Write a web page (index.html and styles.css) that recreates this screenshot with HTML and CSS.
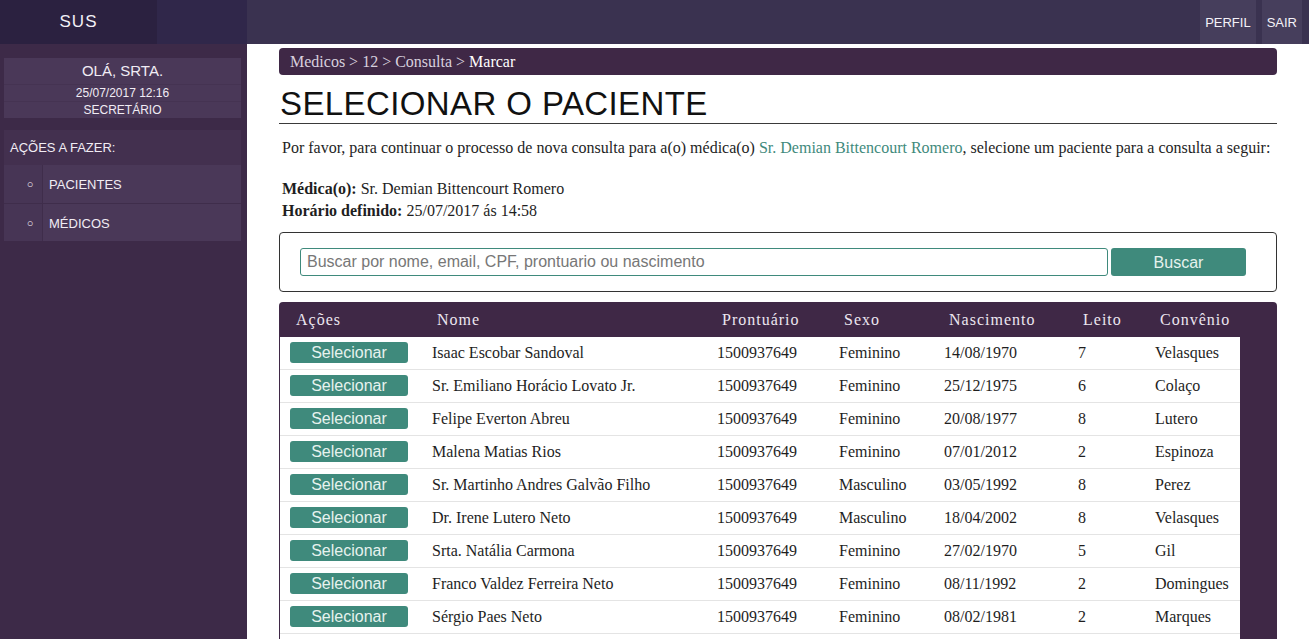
FILE: index.html
```html
<!DOCTYPE html>
<html lang="pt-BR">
<head>
<meta charset="utf-8">
<title>SUS - Selecionar o paciente</title>
<link rel="stylesheet" href="styles.css">
</head>
<body>
<header class="topbar">
  <div class="brand-area">
    <div class="brand">SUS</div>
    <div class="brand-fill"></div>
  </div>
  <nav class="top-nav">
    <a class="top-link" href="#">PERFIL</a>
    <a class="top-link" href="#">SAIR</a>
  </nav>
</header>
<div class="layout">
  <aside class="sidebar">
    <div class="user-box">
      <div class="user-row user-name">OLÁ, SRTA.</div>
      <div class="user-row user-small">25/07/2017 12:16</div>
      <div class="user-row user-small">SECRETÁRIO</div>
    </div>
    <div class="actions">
      <div class="actions-title">AÇÕES A FAZER:</div>
      <ul class="action-list">
        <li class="action-item"><span class="bullet">○</span><a class="action-link" href="#">PACIENTES</a></li>
        <li class="action-item"><span class="bullet">○</span><a class="action-link" href="#">MÉDICOS</a></li>
      </ul>
    </div>
  </aside>
  <main class="content">
    <div class="breadcrumb">Medicos &gt; 12 &gt; Consulta &gt; <span class="crumb-current">Marcar</span></div>
    <h1 class="title">SELECIONAR O PACIENTE</h1>
    <p class="intro">Por favor, para continuar o processo de nova consulta para a(o) médica(o) <a class="doc-link" href="#">Sr. Demian Bittencourt Romero</a>, selecione um paciente para a consulta a seguir:</p>
    <div class="details">
      <div><b>Médica(o):</b> Sr. Demian Bittencourt Romero</div>
      <div><b>Horário definido:</b> 25/07/2017 ás 14:58</div>
    </div>
    <form class="search">
      <input class="search-input" type="text" placeholder="Buscar por nome, email, CPF, prontuario ou nascimento">
      <button class="search-btn" type="button">Buscar</button>
    </form>
    <div class="table-wrap">
      <div class="grid head">
        <div class="th">Ações</div>
        <div class="th">Nome</div>
        <div class="th">Prontuário</div>
        <div class="th">Sexo</div>
        <div class="th">Nascimento</div>
        <div class="th">Leito</div>
        <div class="th">Convênio</div>
      </div>
      <div class="tbody">
        <div class="grid row"><div class="td"><button class="sel-btn" type="button">Selecionar</button></div><div class="td">Isaac Escobar Sandoval</div><div class="td">1500937649</div><div class="td">Feminino</div><div class="td">14/08/1970</div><div class="td">7</div><div class="td">Velasques</div></div>
        <div class="grid row"><div class="td"><button class="sel-btn" type="button">Selecionar</button></div><div class="td">Sr. Emiliano Horácio Lovato Jr.</div><div class="td">1500937649</div><div class="td">Feminino</div><div class="td">25/12/1975</div><div class="td">6</div><div class="td">Colaço</div></div>
        <div class="grid row"><div class="td"><button class="sel-btn" type="button">Selecionar</button></div><div class="td">Felipe Everton Abreu</div><div class="td">1500937649</div><div class="td">Feminino</div><div class="td">20/08/1977</div><div class="td">8</div><div class="td">Lutero</div></div>
        <div class="grid row"><div class="td"><button class="sel-btn" type="button">Selecionar</button></div><div class="td">Malena Matias Rios</div><div class="td">1500937649</div><div class="td">Feminino</div><div class="td">07/01/2012</div><div class="td">2</div><div class="td">Espinoza</div></div>
        <div class="grid row"><div class="td"><button class="sel-btn" type="button">Selecionar</button></div><div class="td">Sr. Martinho Andres Galvão Filho</div><div class="td">1500937649</div><div class="td">Masculino</div><div class="td">03/05/1992</div><div class="td">8</div><div class="td">Perez</div></div>
        <div class="grid row"><div class="td"><button class="sel-btn" type="button">Selecionar</button></div><div class="td">Dr. Irene Lutero Neto</div><div class="td">1500937649</div><div class="td">Masculino</div><div class="td">18/04/2002</div><div class="td">8</div><div class="td">Velasques</div></div>
        <div class="grid row"><div class="td"><button class="sel-btn" type="button">Selecionar</button></div><div class="td">Srta. Natália Carmona</div><div class="td">1500937649</div><div class="td">Feminino</div><div class="td">27/02/1970</div><div class="td">5</div><div class="td">Gil</div></div>
        <div class="grid row"><div class="td"><button class="sel-btn" type="button">Selecionar</button></div><div class="td">Franco Valdez Ferreira Neto</div><div class="td">1500937649</div><div class="td">Feminino</div><div class="td">08/11/1992</div><div class="td">2</div><div class="td">Domingues</div></div>
        <div class="grid row"><div class="td"><button class="sel-btn" type="button">Selecionar</button></div><div class="td">Sérgio Paes Neto</div><div class="td">1500937649</div><div class="td">Feminino</div><div class="td">08/02/1981</div><div class="td">2</div><div class="td">Marques</div></div>
        <div class="grid row empty"></div>
      </div>
    </div>
  </main>
</div>
</body>
</html>
```

FILE: styles.css
```css
* { box-sizing: border-box; }

html, body {
  margin: 0;
  padding: 0;
  height: 100%;
  overflow: hidden;
}

body {
  font-family: "Liberation Serif", "Times New Roman", serif;
  font-size: 16px;
  color: #1e1e1e;
  background: #ffffff;
}

/* Top bar */
.topbar {
  display: flex;
  height: 44px;
  background: #3a3250;
}

.brand-area {
  display: flex;
  width: 247px;
  flex: none;
}

.brand {
  width: 157px;
  background: #2b2140;
  color: #f2f0f6;
  font-family: "Liberation Sans", Arial, sans-serif;
  font-size: 17px;
  letter-spacing: 1px;
  display: flex;
  align-items: center;
  justify-content: center;
}

.brand-fill {
  flex: 1;
  background: #30274a;
}

.top-nav {
  margin-left: auto;
  display: flex;
  gap: 6px;
  padding-right: 7px;
}

.top-link {
  display: flex;
  align-items: center;
  padding: 0 5px;
  background: #463e5c;
  color: #f4f2f8;
  text-decoration: none;
  font-family: "Liberation Sans", Arial, sans-serif;
  font-size: 13px;
}

/* Layout */
.layout {
  display: flex;
  height: calc(100% - 44px);
}

.sidebar {
  width: 247px;
  flex: none;
  background: #3d2a48;
  padding: 14px 6px 0 4px;
  font-family: "Liberation Sans", Arial, sans-serif;
  color: #f1ecf4;
}

.user-box {
  background: #4a3858;
  text-align: center;
}

.user-row {
  border-top: 1px solid #453352;
}

.user-row:first-child { border-top: none; }

.user-name {
  font-size: 15px;
  height: 26px;
  line-height: 26px;
}

.user-small {
  font-size: 12px;
  height: 17px;
  line-height: 16px;
}

.actions {
  margin-top: 12px;
  background: #43304f;
}

.actions-title {
  font-size: 13px;
  height: 35px;
  line-height: 35px;
  padding-left: 6px;
}

.action-list {
  list-style: none;
  margin: 0;
  padding: 0;
}

.action-item {
  display: flex;
  height: 38px;
  align-items: stretch;
  border-top: 1px solid #3f2d4b;
}

.action-item:first-child { border-top: none; }

.bullet {
  width: 39px;
  flex: none;
  display: flex;
  align-items: center;
  justify-content: center;
  font-size: 11px;
  padding-left: 14px;
  background: #473555;
  border-right: 1px solid #3f2d4b;
}

.action-link {
  flex: 1;
  display: flex;
  align-items: center;
  padding-left: 6px;
  padding-top: 1px;
  background: #4a3858;
  color: #f1ecf4;
  text-decoration: none;
  font-size: 13px;
}

/* Content */
.content {
  flex: 1;
  padding: 4px 32px 0 32px;
  min-width: 0;
}

.breadcrumb {
  background: #3f2846;
  color: #d8d0de;
  border-radius: 4px;
  height: 27px;
  line-height: 27px;
  padding-left: 11px;
  font-size: 16px;
}

.crumb-current { color: #ffffff; }

.title {
  font-family: "Liberation Sans", Arial, sans-serif;
  font-weight: normal;
  font-size: 33px;
  letter-spacing: 0.4px;
  line-height: 38px;
  margin: 8px 0 0 0;
  padding-left: 1px;
  padding-top: 2px;
  color: #111;
  border-bottom: 1px solid #3a3a3a;
  height: 41px;
}

.intro {
  margin: 14px 0 0 0;
  padding-left: 3px;
  line-height: 20px;
}

.doc-link {
  color: #3f8a7c;
  text-decoration: none;
}

.details {
  margin-top: 20px;
  padding-left: 3px;
  line-height: 22px;
}

.search {
  margin: 10px 0 0 0;
  border: 1px solid #333;
  border-radius: 4px;
  height: 60px;
  display: flex;
  align-items: center;
  padding: 0 30px 0 20px;
  gap: 3px;
}

.search-input {
  flex: 1;
  height: 28px;
  border: 1px solid #3f8a7c;
  border-radius: 3px;
  padding: 0 6px;
  font-family: "Liberation Sans", Arial, sans-serif;
  font-size: 16px;
  color: #333;
  background: #fff;
  outline: none;
}

.search-input::placeholder { color: #777; }

.search-btn {
  width: 135px;
  height: 28px;
  border: none;
  border-radius: 3px;
  background: #3f8a7c;
  color: #e6f2ee;
  font-family: "Liberation Sans", Arial, sans-serif;
  font-size: 16px;
  padding: 2px 0 0 0;
}

/* Table */
.table-wrap {
  margin-top: 10px;
  background: #3f2846;
  border-radius: 4px 4px 0 0;
  padding-left: 1px;
}

.grid {
  display: grid;
  grid-template-columns: 142px 285px 122px 105px 134px 77px 95px;
  width: 960px;
}

.head {
  height: 35px;
  align-items: center;
}

.th {
  color: #ece6f0;
  letter-spacing: 1px;
  padding-left: 15px;
  padding-top: 1px;
}

.th:first-child { padding-left: 16px; }

.tbody {
  width: 960px;
  background: #fff;
}

.row {
  height: 33px;
  align-items: center;
  border-bottom: 1px solid #e4e4e4;
  background: #fff;
}

.td {
  padding-left: 10px;
  white-space: nowrap;
}

.sel-btn {
  width: 118px;
  height: 21px;
  border: none;
  border-radius: 3px;
  background: #3f8a7c;
  color: #e6f2ee;
  font-family: "Liberation Sans", Arial, sans-serif;
  font-size: 16px;
  padding: 0;
  line-height: 21px;
  margin-top: -1px;
}
```
